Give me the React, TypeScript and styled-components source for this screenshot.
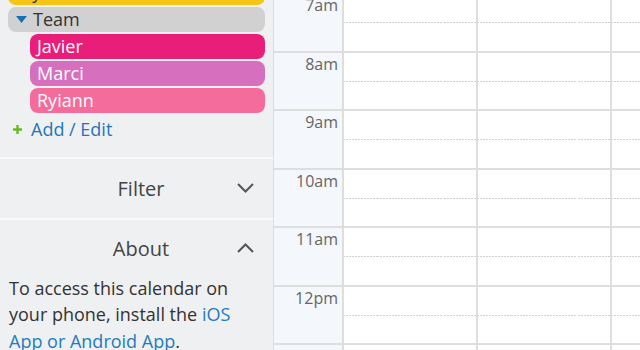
import styled, { createGlobalStyle } from 'styled-components'

const GlobalStyle = createGlobalStyle`
  *, *::before, *::after {
    box-sizing: border-box;
  }
  html, body {
    margin: 0;
    padding: 0;
    background: #ffffff;
  }
  body {
    font-family: 'Open Sans', 'Noto Sans', sans-serif;
    color: #333333;
  }
`

const Page = styled.div`
  display: flex;
  width: 640px;
  height: 350px;
  overflow: hidden;
`

const Sidebar = styled.aside`
  display: flex;
  flex-direction: column;
  flex: 0 0 273px;
  background-color: #eff0f2;
  overflow: hidden;
`

const CalendarList = styled.div`
  display: flex;
  flex-direction: column;
  gap: 2px;
  margin-top: -20px;
  padding: 0 8px;
`

const Pill = styled.div<{ $color: string; $indent?: boolean; $dark?: boolean }>`
  display: flex;
  align-items: center;
  gap: 6px;
  flex: 0 0 25px;
  height: 25px;
  margin-left: ${({ $indent }) => ($indent ? '22px' : '0')};
  padding-left: ${({ $indent }) => ($indent ? '7px' : '8px')};
  border-radius: 8px;
  background-color: ${({ $color }) => $color};
  color: ${({ $dark }) => ($dark ? '#333333' : '#ffffff')};
  font-size: 18px;
  line-height: 25px;
  white-space: nowrap;
`

const AddEdit = styled.a`
  display: flex;
  align-items: center;
  gap: 9px;
  margin: 3px 0 0;
  padding: 0 0 14px 13px;
  font-size: 18px;
  line-height: 26.5px;
  color: #1f76bb;
  text-decoration: none;
`

const Section = styled.section`
  border-top: 2px solid #fafbfc;
`

const SectionHeader = styled.div<{ $height: number }>`
  display: flex;
  align-items: center;
  height: ${({ $height }) => $height}px;
  padding: 0 19px 0 45px;
`

const SectionTitle = styled.span`
  flex: 1;
  text-align: center;
  font-size: 20px;
  color: #444444;
`

const AboutText = styled.p`
  margin: -2px 0 0;
  padding: 0 8px 0 9px;
  font-size: 18px;
  line-height: 26.5px;
  color: #333333;
`

const Link = styled.a`
  color: #1f7bc0;
  text-decoration: none;
`

const CalendarPane = styled.main`
  flex: 1;
  overflow: hidden;
  border-left: 1px solid #d4dfeb;
`

const Hours = styled.div`
  margin-top: -8px;
`

const HourRow = styled.div`
  display: grid;
  grid-template-columns: 68px repeat(3, 134px);
  height: 58.5px;
  border-top: 2px solid #dedede;
`

const TimeCell = styled.div`
  background-color: #f4f7fb;
  padding-right: 4px;
  text-align: right;
  font-size: 16px;
  color: #666666;
`

const DayCell = styled.div`
  border-left: 2px solid #dedede;

  &::before {
    content: '';
    display: block;
    height: 29px;
    border-bottom: 1px solid transparent;
    border-image: repeating-linear-gradient(to right, #d2d2d2 0 2px, transparent 2px 3px) 1;
  }
`

function Chevron({ up }: { up?: boolean }) {
  return (
    <svg width="17" height="10" viewBox="0 0 17 10">
      <polyline
        points={up ? '1,9 8.5,1.5 16,9' : '1,1 8.5,8.5 16,1'}
        fill="none"
        stroke="#555555"
        strokeWidth="2"
      />
    </svg>
  )
}

function Caret() {
  return (
    <svg width="11" height="7" viewBox="0 0 11 7">
      <polygon points="0,0 11,0 5.5,7" fill="#1b6fb3" />
    </svg>
  )
}

function Plus() {
  return (
    <svg width="9" height="9" viewBox="0 0 9 9">
      <path d="M4.5 0v9M0 4.5h9" stroke="#66bb1e" strokeWidth="2.4" />
    </svg>
  )
}

const members = [
  { name: 'Javier', color: '#e91e79' },
  { name: 'Marci', color: '#d76fbf' },
  { name: 'Ryiann', color: '#f46c9b' },
]

const hours = ['7am', '8am', '9am', '10am', '11am', '12pm', '1pm']

export default function App() {
  return (
    <>
      <GlobalStyle />
      <Page>
        <Sidebar>
          <CalendarList>
            <Pill $color="#f6c518" $dark>
              My Calendar
            </Pill>
            <Pill $color="#d1d1d1" $dark>
              <Caret />
              Team
            </Pill>
            {members.map((m) => (
              <Pill key={m.name} $color={m.color} $indent>
                {m.name}
              </Pill>
            ))}
          </CalendarList>
          <AddEdit href="#">
            <Plus />
            Add / Edit
          </AddEdit>

          <Section>
            <SectionHeader $height={59}>
              <SectionTitle>Filter</SectionTitle>
              <Chevron />
            </SectionHeader>
          </Section>

          <Section>
            <SectionHeader $height={57}>
              <SectionTitle>About</SectionTitle>
              <Chevron up />
            </SectionHeader>
            <AboutText>
              To access this calendar on your phone, install the{' '}
              <Link href="#">iOS App or Android App</Link>.
            </AboutText>
          </Section>
        </Sidebar>

        <CalendarPane>
          <Hours>
            {hours.map((h) => (
              <HourRow key={h}>
                <TimeCell>{h}</TimeCell>
                <DayCell />
                <DayCell />
                <DayCell />
              </HourRow>
            ))}
          </Hours>
        </CalendarPane>
      </Page>
    </>
  )
}
